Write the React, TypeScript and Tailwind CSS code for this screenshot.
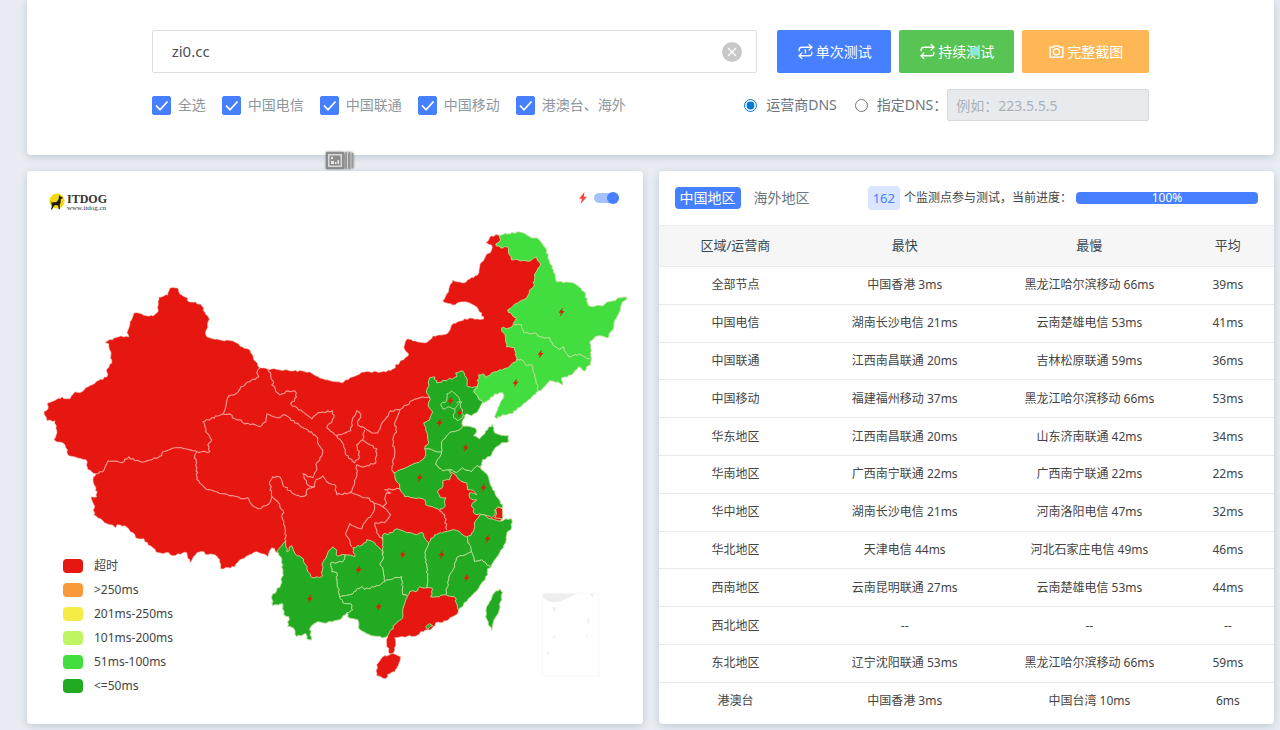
import { Repeat, Repeat1 } from 'lucide-react';
import { useState } from 'react';
import { RiCameraLine } from 'react-icons/ri';

const NETWORKS = ['全选', '中国电信', '中国联通', '中国移动', '港澳台、海外'];

const RESULTS = [
  ['全部节点', '中国香港 3ms', '黑龙江哈尔滨移动 66ms', '39ms'],
  ['中国电信', '湖南长沙电信 21ms', '云南楚雄电信 53ms', '41ms'],
  ['中国联通', '江西南昌联通 20ms', '吉林松原联通 59ms', '36ms'],
  ['中国移动', '福建福州移动 37ms', '黑龙江哈尔滨移动 66ms', '53ms'],
  ['华东地区', '江西南昌联通 20ms', '山东济南联通 42ms', '34ms'],
  ['华南地区', '广西南宁联通 22ms', '广西南宁联通 22ms', '22ms'],
  ['华中地区', '湖南长沙电信 21ms', '河南洛阳电信 47ms', '32ms'],
  ['华北地区', '天津电信 44ms', '河北石家庄电信 49ms', '46ms'],
  ['西南地区', '云南昆明联通 27ms', '云南楚雄电信 53ms', '44ms'],
  ['西北地区', '--', '--', '--'],
  ['东北地区', '辽宁沈阳联通 53ms', '黑龙江哈尔滨移动 66ms', '59ms'],
  ['港澳台', '中国香港 3ms', '中国台湾 10ms', '6ms'],
];

const LEGEND = [
  { label: '超时', color: 'bg-[#e61610]' },
  { label: '>250ms', color: 'bg-[#f89a37]' },
  { label: '201ms-250ms', color: 'bg-[#f5ed45]' },
  { label: '101ms-200ms', color: 'bg-[#bef663]' },
  { label: '51ms-100ms', color: 'bg-[#42dd3f]' },
  { label: '<=50ms', color: 'bg-[#22aa22]' },
];

// mainland outline, clockwise from the Altai
const MAINLAND =
  '170,288 178,288 180,294 185,297 190,302 196,302 202,306 205,312 209,318 208,327 206,331 207,337 220,340 233,341 240,346 250,350 254,360 260,368 268,369 280,370 290,371 303,371 310,372 313,374 320,378 328,380 337,382 342,383 353,377 365,372 386,372 393,369 400,362 409,355 404,347 408,339 416,341 425,343 430,340 433,336 440,335 447,334 452,325 461,321 470,318 478,319 484,319 482,313 477,307 470,303 462,302 453,305 447,303 443,301 447,294 450,286 453,280 463,283 470,279 478,275 480,267 486,256 492,250 492,245 486,243 492,236 499,235 520,240 545,262 548,300 530,340 540,370 510,390 478,390 470,408 460,425 480,440 478,460 486,480 490,498 498,507 503,512 503,519 490,530 495,550 480,570 470,590 459,608 458,614 453,617 447,621 440,623 436,623 432,629 427,630 421,632 417,636 403,637 395,638 396,646 394,653 390,654 387,645 388,636 370,630 350,605 320,615 300,620 290,600 285,560 278,553 272,548 268,557 262,554 257,552 248,556 240,560 235,567 221,569 220,560 215,555 206,555 204,552 197,553 190,563 187,553 178,554 173,556 169,553 163,554 158,553 153,548 145,542 144,539 138,539 133,533 125,526 117,525 116,528 110,525 103,521 94,515 94,505 91,497 97,497 96,488 93,480 96,474 88,470 86,460 77,458 68,455 65,445 54,440 57,433 55,421 47,421 44,412 48,409 47,404 56,400 62,397 64,399 70,399 75,392 82,392 88,387 98,381 107,377 107,369 112,363 111,355 109,344 105,342 121,336 129,337 127,333 130,322 134,313 143,315 153,316 158,312 158,302 159,297 164,296 168,295';

const HAINAN = '394,654 401,657 399,664 395,672 390,674 386,679 377,676 377,665 383,657';

const SHANGHAI = '496,510 498,507 503,509 503,519 495,518 497,514';

const LIGHT_GREEN = [
  // Heilongjiang
  '499,235 508,234 520,232 532,238 538,238 546,248 550,262 554,270 557,282 567,282 577,285 585,292 589,306 603,306 608,302 613,301 619,298 627,297 621,307 617,318 613,330 608,338 598,336 591,341 591,348 592,359 585,357 580,354 569,357 564,347 560,350 553,345 550,338 540,337 537,334 524,333 522,325 514,324 517,318 514,317 508,310 518,303 527,298 530,290 534,287 535,275 541,264 537,257 532,260 527,261 519,260 512,260 508,247 501,248 496,244 501,240',
  // Jilin
  '514,324 522,325 524,333 537,334 540,337 550,338 553,345 560,350 564,347 569,357 580,354 585,357 592,359 591,365 587,367 585,371 579,367 572,375 565,377 562,378 563,385 558,382 550,381 545,387 539,391 535,377 532,365 527,366 522,360 517,360 515,348 507,347 506,338 502,328 510,328',
  // Liaoning
  '517,360 522,360 527,366 532,365 535,377 539,391 527,402 518,408 513,414 503,415 497,419 495,417 498,410 504,398 503,393 495,394 490,400 483,403 474,392 478,385 479,375 483,374 486,378 495,372 508,368',
];

const GREEN = [
  // Hebei
  '463,371 467,378 468,387 475,387 478,387 474,392 483,403 478,412 472,416 467,414 463,420 463,426 460,430 450,433 442,442 442,452 425,449 429,443 428,435 424,423 430,420 433,412 429,407 430,398 427,393 430,378 435,377 437,383 448,380 457,377 456,373',
  // Shandong
  '463,426 475,428 477,432 474,436 480,439 488,430 493,424 495,433 509,436 509,442 502,443 495,449 492,455 483,460 482,466 478,466 471,472 463,468 457,473 449,470 443,471 436,465 440,457 442,452 442,442 450,433 460,430',
  // Henan
  '425,449 442,452 440,457 436,465 443,471 449,470 452,475 450,480 443,481 443,487 438,491 440,497 446,498 445,507 440,511 433,507 426,505 425,500 413,498 405,497 400,488 394,473 408,467 417,463 423,460 426,455',
  // Jiangsu
  '449,470 457,473 463,468 471,472 478,466 482,470 488,475 490,482 493,490 497,497 503,505 503,508 495,510 495,515 492,518 483,515 475,514 472,505 477,500 470,498 470,493 477,495 475,492 468,490 467,483 460,480 456,475',
  // Zhejiang
  '480,515 483,515 490,519 495,520 503,521 506,519 512,519 512,527 507,535 506,543 500,553 492,565 491,568 482,560 475,562 472,552 467,538 474,532 475,523',
  // Jiangxi
  '429,543 435,535 445,532 453,530 460,532 467,537 472,552 463,556 457,558 455,567 449,580 446,595 437,597 431,597 433,589 427,588 428,580 427,567 425,553',
  // Fujian
  '472,552 475,562 482,560 491,568 488,569 488,575 483,582 478,590 468,600 459,611 457,604 455,597 446,595 449,580 455,567 457,558 463,556',
  // Hunan
  '383,535 393,533 397,529 407,533 417,535 423,533 426,540 429,543 425,553 427,567 428,580 427,588 420,587 418,591 410,592 408,596 403,595 402,577 395,578 385,582 383,568 380,565 383,560',
  // Guizhou
  '383,552 375,543 367,540 363,545 353,548 355,557 345,555 343,562 331,563 332,572 337,573 337,582 340,597 350,595 362,587 365,590 377,586 385,582 383,568 380,565 383,560',
  // Guangxi
  '340,597 350,595 362,587 365,590 377,586 385,582 395,578 402,577 403,595 408,597 403,610 403,618 397,623 390,632 387,637 382,638 370,635 360,630 358,620 348,617 347,613 353,610 351,604 343,603 338,597',
  // Yunnan
  '340,597 343,603 351,604 353,610 347,613 340,620 327,623 318,622 312,626 310,630 312,640 307,639 306,634 297,637 293,628 288,627 289,617 284,615 283,604 273,606 272,597 281,585 283,573 282,560 277,552 281,547 286,541 287,552 292,546 297,556 302,558 312,578 322,577 323,563 328,553 333,547 337,552 337,556 345,555 343,562 331,563 332,572 337,573 337,582',
  // Taiwan
  '500,589 503,593 499,613 493,625 492,631 486,617 487,607 493,595',
  // Hong Kong
  '426,627 430,624 433,626 428,630',
];

// borders between provinces of the west and the centre
const RED_BORDERS = [
  '260,368 257,373 259,377 248,382 241,387 236,394 229,396 223,414 203,422 205,427 207,433 212,440 208,445 210,452 197,452 193,451 184,449 175,448 163,452 162,456 145,462 135,461 129,457 122,463 108,461 103,472 95,474',
  '223,414 230,414 235,419 241,420 245,424 253,424 260,427 266,422 267,414 279,418 285,415 290,418 295,423 308,430 317,437 319,445 323,450 320,460 316,465 317,470 315,473 313,478 308,477 303,474 308,485 315,487 307,490 307,495 301,497 292,493 283,485 280,477 273,477 270,482 272,497 268,505 258,509 252,505 248,498 241,499 230,496 217,492 207,490 197,480 197,468 195,455 197,452',
  '272,497 278,502 284,513 282,517 285,527 286,541',
  '268,369 274,383 272,385 280,395 288,391 295,391 297,397 291,404 303,412 312,419 318,413 333,411 334,418 327,428 337,436 351,431 353,418 357,411 361,415 358,425 366,429 372,433 378,433 385,420 391,411 400,410 403,408 412,401 420,398 430,397',
  '337,436 344,445 346,455 355,463 360,457 357,445 363,440 370,445 377,449 376,463 365,467 357,465 357,473 355,483 350,493',
  '363,440 365,430',
  '315,487 316,480 323,476 327,482 335,485 337,495 350,493 360,496 367,498 373,502 383,507 387,503 385,499 387,493 391,493 385,490 400,489',
  '400,410 395,423 397,432 393,440 395,453 392,470 394,473',
  '373,502 375,507 372,515 367,520 362,529 350,524 346,535 352,547',
  '383,507 387,510 391,515 385,523 375,523 377,533 383,540',
  '440,511 445,515 447,530',
];

// Beijing and Tianjin
const CITY_BORDERS = [
  '452,391 459,397 460,403 455,409 449,407 443,409 441,405 447,400 447,394 452,391',
  '457,403 462,402 461,408 463,410 463,418 458,421 454,418 455,409',
];

const BOLTS = [
  [562, 312],
  [541, 354],
  [516, 383],
  [451, 401],
  [460, 413],
  [440, 423],
  [466, 448],
  [420, 478],
  [484, 488],
  [488, 539],
  [467, 578],
  [442, 555],
  [403, 555],
  [359, 570],
  [379, 607],
  [310, 599],
];

// Splits long edges and nudges the new points, so borders look surveyed.
// The nudge depends on position only: neighbours keep a common border.
const roughen = (points: string, closed = true) => {
  const nodes = points.split(' ').map((p) => p.split(',').map(Number));
  const last = closed ? nodes.length : nodes.length - 1;
  const result: string[] = [];

  for (let i = 0; i < last; i++) {
    const [x1, y1] = nodes[i];
    const [x2, y2] = nodes[(i + 1) % nodes.length];
    const steps = Math.max(1, Math.round(Math.hypot(x2 - x1, y2 - y1) / 2.5));

    result.push(`${x1},${y1}`);
    for (let k = 1; k < steps; k++) {
      const x = x1 + ((x2 - x1) * k) / steps;
      const y = y1 + ((y2 - y1) * k) / steps;
      const dx = Math.sin(x * 2.1 + y * 3.7) * 0.8;
      const dy = Math.sin(x * 3.3 - y * 1.9) * 0.8;
      result.push(`${(x + dx).toFixed(1)},${(y + dy).toFixed(1)}`);
    }
  }
  if (!closed) result.push(nodes[nodes.length - 1].join(','));

  return result.join(' ');
};

function Logo() {
  return (
    <div className="flex h-5 items-center gap-0.5">
      <svg viewBox="0 0 17 18" className="h-[18px] w-4" aria-hidden="true">
        <circle cx="8.5" cy="9" r="8" fill="#f3d90c" />
        <path
          d="M1.5 8.5 3 10.5l5-.5 2.2-2.8.6-4.7 1.2 1.6 2.5.8-.3 1.5-1.7.5-.2 4-.9 2 .2 4.8h-1.3l-.6-4-3.4-.4-1.500 1.700-1.600 2.900H2.100l1-3.400-.5-3.400z"
          fill="#1c1a12"
        />
      </svg>
      <div className="flex flex-col font-['Liberation_Serif',serif] text-[#333]">
        <span className="text-xs leading-[14px] font-bold">ITDOG</span>
        <span className="text-[7px] leading-[5px]">www.itdog.cn</span>
      </div>
    </div>
  );
}

function Bolt({ x, y }: { x: number; y: number }) {
  return (
    <path
      transform={`translate(${x} ${y})`}
      d="M1.2-4.5-3 .8h2.3l-1 3.700L3-1H.6z"
      fill="#d8200c"
    />
  );
}

function ChinaMap() {
  return (
    <svg viewBox="27 226 616 498" className="block w-full" role="img" aria-label="中国地区">
      <g fill="#e61610" stroke="#f3c0b4" strokeWidth="0.6" strokeLinejoin="round">
        <polygon points={roughen(MAINLAND)} />
        <polygon points={roughen(HAINAN)} />
      </g>
      <g fill="none" stroke="#fb9c94" strokeWidth="1.1" strokeLinejoin="round">
        {RED_BORDERS.map((points) => (
          <polyline key={points} points={roughen(points, false)} />
        ))}
      </g>
      <g stroke="#b9e096" strokeWidth="0.9" strokeLinejoin="round">
        {LIGHT_GREEN.map((points) => (
          <polygon key={points} points={roughen(points)} fill="#42dd3f" />
        ))}
        {GREEN.map((points) => (
          <polygon key={points} points={roughen(points)} fill="#22aa22" />
        ))}
        <polygon points={SHANGHAI} fill="#e61610" />
        {CITY_BORDERS.map((points) => (
          <polyline key={points} points={roughen(points, false)} fill="none" />
        ))}
      </g>
      {BOLTS.map(([x, y]) => (
        <Bolt key={`${x}-${y}`} x={x} y={y} />
      ))}
      {/* South China Sea inset */}
      <rect x="542.5" y="593.5" width="57" height="83" fill="none" stroke="#f7f7f7" />
      <path
        d="M543 594h34q-10 6-19 8-10 2-15-5zM590 594h4l-1 4zM553 607l4 1-3 5zM588 618h1.500v6h-1.500zM587 635l1.500 1-1 3zM553 636h3l-2 3zM547 652l3 1-1 3zM580 650l-3 5zM566 666h3z"
        fill="#eeeeee"
      />
    </svg>
  );
}

function TestForm() {
  const [target, setTarget] = useState('zi0.cc');
  const [dns, setDns] = useState('isp');

  return (
    <section className="relative rounded-b bg-white pt-[30px] pb-[34px] shadow-[0_2px_8px_rgba(96,115,140,0.3)]">
      <form className="mx-auto flex w-4/5 flex-col gap-4">
        <div className="flex gap-5">
          <div className="flex h-[43px] flex-1 items-center rounded-xs border border-[#dcdfe3] pr-3.5 pl-[19px]">
            <input
              className="min-w-0 flex-1 text-[15px] text-[#495057] outline-none"
              aria-label="测试地址"
              value={target}
              onChange={(e) => setTarget(e.target.value)}
            />
            <button type="button" aria-label="清空" onClick={() => setTarget('')}>
              <svg viewBox="0 0 20 20" className="size-5">
                <circle cx="10" cy="10" r="10" fill="#c8c8c8" />
                <path d="m6 6 8 8m0-8-8 8" stroke="#fff" strokeWidth="1.3" />
              </svg>
            </button>
          </div>
          <div className="flex h-[43px] gap-2 text-sm text-white">
            <button
              type="button"
              className="flex w-[114px] items-center justify-center gap-0.5 rounded-xs bg-[#467fff]"
            >
              <Repeat1 className="size-[17px]" strokeWidth={1.8} />
              单次测试
            </button>
            <button
              type="button"
              className="flex w-[115px] items-center justify-center gap-0.5 rounded-xs bg-[#57c453]"
            >
              <Repeat className="size-[17px]" strokeWidth={1.8} />
              持续测试
            </button>
            <button
              type="button"
              className="flex w-[127px] items-center justify-center gap-0.5 rounded-xs bg-[#ffb756]"
            >
              <RiCameraLine className="size-[17px]" />
              完整截图
            </button>
          </div>
        </div>

        <div className="flex h-8 items-center justify-between text-sm">
          <div className="flex gap-4 text-[#8f979e]">
            {NETWORKS.map((name) => (
              <label key={name} className="flex items-center gap-[7px]">
                <span className="grid size-[19px]">
                  <input
                    type="checkbox"
                    defaultChecked
                    className="peer col-start-1 row-start-1 appearance-none rounded-xs border border-[#467fff] checked:bg-[#467fff]"
                  />
                  <svg
                    viewBox="0 0 19 19"
                    className="pointer-events-none col-start-1 row-start-1 hidden peer-checked:block"
                  >
                    <path d="m4 9.5 4 4.3 7.5-8.3" fill="none" stroke="#fff" strokeWidth="1.7" />
                  </svg>
                </span>
                {name}
              </label>
            ))}
          </div>
          <div className="flex items-center text-[#6c757d]">
            <label className="mr-[18px] flex items-center gap-[9px]">
              <input
                type="radio"
                name="dns"
                className="size-[13px] accent-[#0078d4]"
                checked={dns === 'isp'}
                onChange={() => setDns('isp')}
              />
              运营商DNS
            </label>
            <label className="flex items-center gap-[9px]">
              <input
                type="radio"
                name="dns"
                className="size-[13px] accent-[#0078d4]"
                checked={dns === 'custom'}
                onChange={() => setDns('custom')}
              />
              指定DNS：
            </label>
            <input
              className="h-8 w-[202px] rounded-xs border border-[#d5d9de] bg-[#e8ebee] px-2 placeholder:text-[#a9b2ba]"
              aria-label="指定DNS"
              placeholder="例如：223.5.5.5"
              disabled={dns === 'isp'}
            />
          </div>
        </div>
      </form>

      {/* floating picture handle over the card edge */}
      <svg
        viewBox="0 0 28 20"
        className="absolute -bottom-4 left-[24%] h-5 w-7 drop-shadow-[0_0_1px_#666]"
        aria-hidden="true"
      >
        <path d="M0 1h18v17H0z" fill="#8d8d8d" />
        <path d="M2 3h14v13H2z" fill="#d9d9d9" />
        <path d="M3.500 4.500h11v10h-11z" fill="#8d8d8d" />
        <path d="M5 6h2v2H5zM5 10h3v3H5zM9 11h1.500v2H9zM11.500 9h1.500v4h-1.500z" fill="#e6e6e6" />
        <path d="M20 1v17M23.500 1v17M26.500 2v15" stroke="#9a9a9a" strokeWidth="1.5" />
        <path d="M21.500 1v17M25 1v17" stroke="#d2d2d2" />
      </svg>
    </section>
  );
}

function MapCard() {
  return (
    <section className="relative rounded bg-white shadow-[0_2px_8px_rgba(96,115,140,0.3)]">
      <header className="flex h-[55px] items-start justify-between pt-[18px] pr-6 pl-[22px]">
        <div className="pt-0.5">
          <Logo />
        </div>
        <label className="flex h-[18px] items-center gap-1.5">
          <svg viewBox="-5 -6 10 12" className="h-3.5 w-2.5" aria-hidden="true">
            <path d="M1.5-6-4 .8h3L-2.400 6 4-1.300H.8z" fill="#f2453d" />
          </svg>
          <span className="grid h-3 w-[25px] items-center">
            <input
              type="checkbox"
              role="switch"
              aria-label="闪烁标记"
              defaultChecked
              className="peer col-start-1 row-start-1 h-2.5 w-6 appearance-none rounded-full bg-gray-300 checked:bg-[#a6c1ff]"
            />
            <span className="pointer-events-none col-start-1 row-start-1 size-3 rounded-full bg-gray-500 peer-checked:justify-self-end peer-checked:bg-[#467fff]" />
          </span>
        </label>
      </header>
      <ChinaMap />
      <ul className="absolute bottom-[26px] left-9 text-xs text-[#444]">
        {LEGEND.map(({ label, color }) => (
          <li key={label} className="flex h-6 items-center gap-[11px]">
            <span className={`h-3.5 w-5 rounded-sm ${color}`} />
            {label}
          </li>
        ))}
      </ul>
    </section>
  );
}

function ResultCard() {
  return (
    <section className="rounded bg-white shadow-[0_2px_8px_rgba(96,115,140,0.3)]">
      <header className="flex h-[54px] items-center justify-between px-4">
        <nav className="flex items-center gap-2 text-sm">
          <a href="#china" className="rounded bg-[#467fff] px-[5px] leading-[22px] text-white">
            中国地区
          </a>
          <a href="#overseas" className="px-[5px] leading-[22px] text-[#6c757d]">
            海外地区
          </a>
        </nav>
        <div className="flex items-center gap-1 text-xs text-[#444]">
          <span className="rounded-sm bg-[#dae5ff] px-[5px] text-[13px] leading-6 text-[#467fff]">
            162
          </span>
          <span>个监测点参与测试，当前进度：</span>
          <div
            className="w-[182px] rounded bg-[#467fff] text-center leading-3 text-white"
            role="progressbar"
            aria-label="当前进度"
            aria-valuenow={100}
          >
            100%
          </div>
        </div>
      </header>
      <table className="h-[494px] w-full table-fixed text-center text-xs text-[#444]">
        <thead>
          <tr className="h-[41px] border-y border-[#e9ecef] bg-[#f6f6f7] text-[13px] text-[#37474f]">
            <th className="w-[25%] font-normal">区域/运营商</th>
            <th className="w-[30%] font-normal">最快</th>
            <th className="w-[30%] font-normal">最慢</th>
            <th className="w-[15%] font-normal">平均</th>
          </tr>
        </thead>
        <tbody>
          {RESULTS.map(([area, fastest, slowest, average]) => (
            <tr key={area} className="border-b border-[#e6e9ed] last:border-b-0">
              <td>{area}</td>
              <td>{fastest}</td>
              <td>{slowest}</td>
              <td>{average}</td>
            </tr>
          ))}
        </tbody>
      </table>
    </section>
  );
}

function App() {
  return (
    <main className="flex min-h-screen flex-col gap-4 bg-[#e9edf3] pr-1.5 pb-1.5 pl-[27px] font-['Noto_Sans','Noto_Sans_CJK_SC',sans-serif]">
      <TestForm />
      <div className="grid grid-cols-2 gap-4">
        <MapCard />
        <ResultCard />
      </div>
    </main>
  );
}

export default App;
